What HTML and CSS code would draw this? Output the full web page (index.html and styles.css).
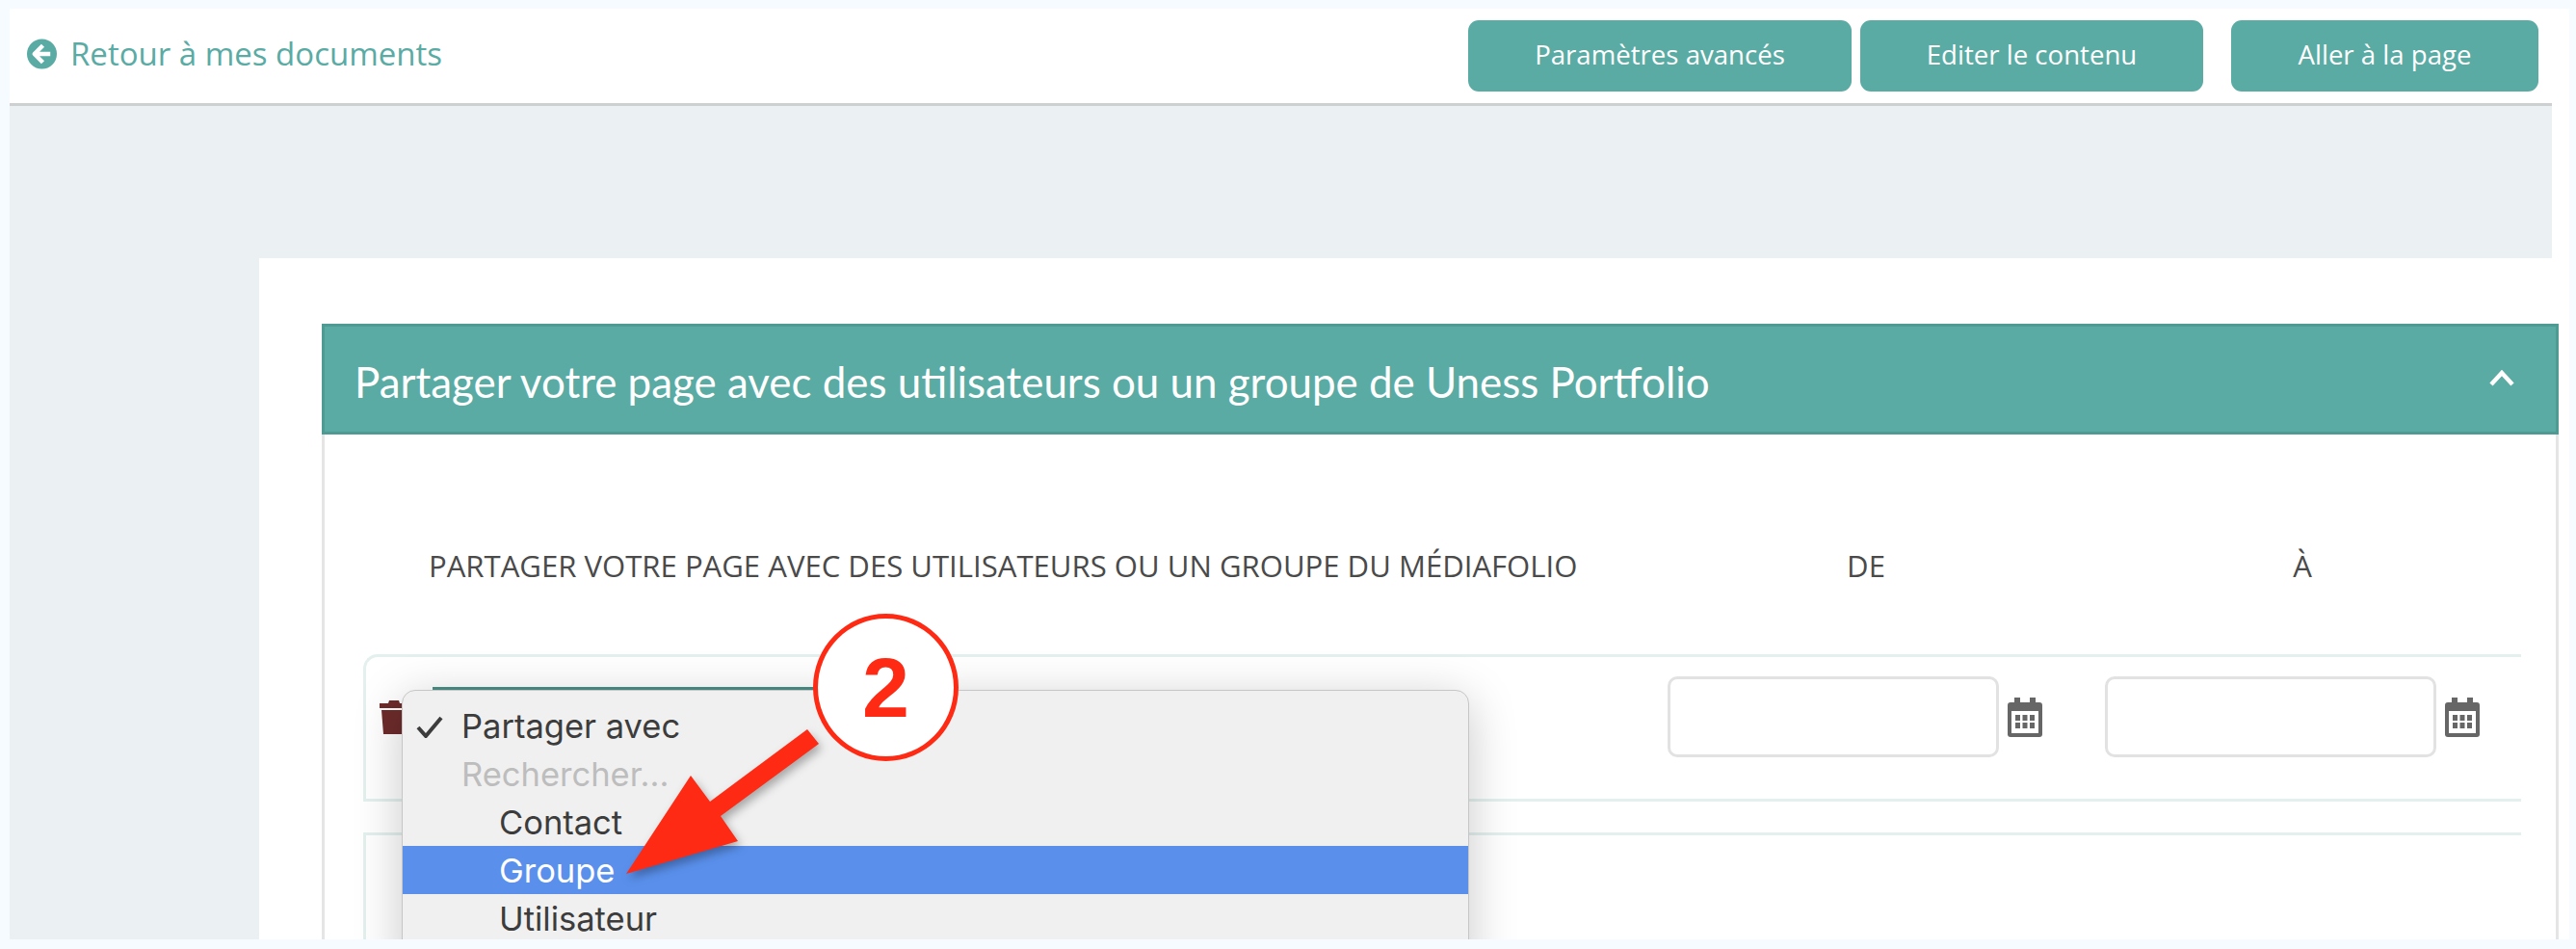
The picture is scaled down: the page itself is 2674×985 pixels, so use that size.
FILE: index.html
```html
<!DOCTYPE html>
<html lang="fr">
<head>
<meta charset="UTF-8">
<meta name="viewport" content="width=device-width, initial-scale=1.0">
<title>Partager votre page</title>
<link rel="stylesheet" href="styles.css">
</head>
<body>

<div class="window">

  <!-- barre du haut -->
  <header class="topbar">
    <a class="back-link" href="#">
      <svg class="back-icon" viewBox="0 0 32 32">
        <circle cx="16" cy="16" r="16" fill="#5aaba4"/>
        <path d="M17 7 L8 16 L17 25 M8.5 16 H25" fill="none" stroke="#fff" stroke-width="4.6" stroke-linejoin="round"/>
      </svg>
      <span>Retour à mes documents</span>
    </a>
    <div class="actions">
      <button class="btn btn-settings">Paramètres avancés</button>
      <button class="btn btn-edit">Editer le contenu</button>
      <button class="btn btn-go">Aller à la page</button>
    </div>
  </header>

  <main class="content">
    <section class="card">
      <div class="panel">
        <div class="panel-header">
          <h2>Partager votre page avec des utilisateurs ou un groupe de Uness Portfolio</h2>
          <svg class="chevron" viewBox="0 0 26 17">
            <path d="M2 15 L13 3 L24 15" fill="none" stroke="#fff" stroke-width="4.4"/>
          </svg>
        </div>
        <div class="panel-body">
          <div class="columns">
            <div class="col-who">Partager votre page avec des utilisateurs ou un groupe du Médiafolio</div>
            <div class="col-from">De</div>
            <div class="col-to">À</div>
          </div>

          <div class="share-row">
            <svg class="trash" viewBox="0 0 30 35">
              <path d="M10 0 H20 L21 3 H30 V8 H0 V3 H9 Z M2 10 H28 L26 35 H4 Z" fill="#6e2b2b"/>
            </svg>
            <div class="select-box"></div>
            <div class="date-field date-from">
              <div class="date-input"></div>
              <svg class="cal" viewBox="0 0 36 41">
                <path d="M3 5 H7 V0 H13 V5 H23 V0 H29 V5 H33 Q36 5 36 8 V38 Q36 41 33 41 H3 Q0 41 0 38 V8 Q0 5 3 5 Z" fill="#666"/>
                <rect x="4" y="14" width="28" height="23" fill="#fff"/>
                <g fill="#666">
                  <rect x="8" y="18" width="5" height="6"/><rect x="15.500" y="18" width="5" height="6"/><rect x="23" y="18" width="5" height="6"/>
                  <rect x="8" y="26" width="5" height="6"/><rect x="15.500" y="26" width="5" height="6"/><rect x="23" y="26" width="5" height="6"/>
                </g>
              </svg>
            </div>
            <div class="date-field date-to">
              <div class="date-input"></div>
              <svg class="cal" viewBox="0 0 36 41">
                <path d="M3 5 H7 V0 H13 V5 H23 V0 H29 V5 H33 Q36 5 36 8 V38 Q36 41 33 41 H3 Q0 41 0 38 V8 Q0 5 3 5 Z" fill="#666"/>
                <rect x="4" y="14" width="28" height="23" fill="#fff"/>
                <g fill="#666">
                  <rect x="8" y="18" width="5" height="6"/><rect x="15.500" y="18" width="5" height="6"/><rect x="23" y="18" width="5" height="6"/>
                  <rect x="8" y="26" width="5" height="6"/><rect x="15.500" y="26" width="5" height="6"/><rect x="23" y="26" width="5" height="6"/>
                </g>
              </svg>
            </div>
          </div>

          <div class="share-row share-row-next"></div>
        </div>
      </div>
    </section>
  </main>

  <!-- menu deroulant natif -->
  <div class="menu">
    <div class="menu-item">
      <svg class="check" viewBox="0 0 28 23">
        <path d="M2 12 L10 21 L26 2" fill="none" stroke="#3c3c3c" stroke-width="4"/>
      </svg>
      <span>Partager avec</span>
    </div>
    <div class="menu-item is-disabled"><span>Rechercher...</span></div>
    <div class="menu-item is-child"><span>Contact</span></div>
    <div class="menu-item is-child is-active"><span>Groupe</span></div>
    <div class="menu-item is-child"><span>Utilisateur</span></div>
  </div>

  <!-- annotation rouge -->
  <svg class="arrow" viewBox="0 0 260 200">
    <polygon points="198,28 210,43 108,118 126,144 10,178 77,76 97,103" fill="#fe2a14"/>
  </svg>
  <div class="step-badge">2</div>
</div>

</body>
</html>
```

FILE: styles.css
```css
body {
  margin: 0;
  height: 985px;
  overflow: hidden;
  background-color: #f5fbfe;
  font-family: "Open Sans", sans-serif;
}
.window {
  position: relative;
  width: 2657px;
  height: 966px;
  margin: 9px 0 0 10px;
  overflow: hidden;
  background-color: #fff;
  display: flex;
  flex-direction: column;
}

/* barre du haut */
.topbar {
  height: 98px;
  flex-shrink: 0;
  border-bottom: 3px solid #cdcfd1;
  margin-right: 18px;
  padding-left: 18px;
  display: flex;
  align-items: flex-start;
  justify-content: space-between;
}
.back-link {
  display: flex;
  align-items: center;
  gap: 14px;
  margin-top: 31px;
  color: #5aaba4;
  font-size: 33px;
  line-height: 32px;
  text-decoration: none;
}
.back-icon {
  width: 31px;
  height: 32px;
}
.actions {
  display: flex;
  margin-top: 12px;
  margin-right: 14px;
}
.btn {
  height: 74px;
  padding: 0 0 4px;
  border: none;
  border-radius: 11px;
  background-color: #5aaba4;
  color: #fff;
  font-family: "Open Sans", sans-serif;
  font-size: 27.6px;
}
.btn-settings { width: 398px; }
.btn-edit { width: 356px; margin-left: 9px; }
.btn-go { width: 319px; margin-left: 29px; }

/* contenu */
.content {
  flex: 1;
  margin-right: 18px;
  padding: 158px 0 0 259px;
  background-color: #ebf0f3;
}
.card {
  height: 100%;
  margin-right: -18px;
  padding: 68px 11px 0 65px;
  background-color: #fff;
}
.panel-header {
  box-sizing: border-box;
  height: 115px;
  padding: 0 43px 0 31px;
  border: 3px solid #4f9a92;
  background-color: #5aaba4;
  display: flex;
  align-items: center;
  justify-content: space-between;
}
.panel-header h2 {
  margin: 4px 0 0;
  color: #fff;
  font-family: Lato, sans-serif;
  font-size: 43.9px;
  font-weight: 400;
}
.chevron {
  width: 26px;
  height: 17px;
  margin-top: -3px;
}
.panel-body {
  height: 600px;
  border-left: 3px solid #e5e5e5;
  border-right: 3px solid #e5e5e5;
  padding: 0 36px 0 40px;
}
.columns {
  box-sizing: border-box;
  height: 228px;
  padding-top: 44px;
  display: flex;
  align-items: center;
  color: #4a4a4a;
  font-size: 31.1px;
  text-transform: uppercase;
  text-align: center;
}
.col-who {
  flex-shrink: 0;
  width: 1400px;
  padding-left: 68px;
  box-sizing: border-box;
  text-align: left;
}
.col-from {
  flex-shrink: 0;
  width: 320px;
  margin-right: 66px;
}
.col-to {
  flex-shrink: 0;
  width: 454px;
}

/* lignes de partage */
.share-row {
  box-sizing: border-box;
  height: 153px;
  border: 3px solid #e3f0ee;
  border-right: none;
  border-radius: 15px 0 0 0;
  padding-left: 14px;
  display: flex;
  align-items: flex-start;
}
.share-row-next {
  margin-top: 32px;
  height: 300px;
  border-radius: 0;
}
.trash {
  width: 30px;
  height: 35px;
  margin-top: 45px;
}
.select-box {
  width: 440px;
  height: 60px;
  margin: 31px 810px 0 25px;
  border-top: 3px solid #4b8f86;
}
.date-field {
  display: flex;
  align-items: center;
  gap: 9px;
  margin-top: 20px;
}
.date-from { margin-left: 32px; }
.date-to { margin-left: 65px; }
.date-input {
  box-sizing: border-box;
  width: 344px;
  height: 84px;
  border: 3px solid #e2e2e2;
  border-radius: 10px;
}
.cal {
  width: 36px;
  height: 41px;
}

/* menu */
.menu {
  position: absolute;
  left: 407px;
  top: 707px;
  box-sizing: border-box;
  width: 1108px;
  height: 300px;
  padding-top: 11px;
  border: 1px solid #c6c6c6;
  border-radius: 14px;
  background-color: #f0f0f0;
  box-shadow: 0 10px 50px rgba(0, 0, 0, 0.22);
  font-family: Inter, sans-serif;
  font-size: 34.5px;
  color: #3c3c3c;
}
.menu-item {
  position: relative;
  height: 50px;
  line-height: 51px;
  padding-left: 61px;
}
.menu-item.is-child {
  padding-left: 100px;
}
.menu-item.is-disabled {
  color: #bdbdbd;
}
.menu-item.is-active {
  background-color: #5a90ec;
  color: #fff;
}
.check {
  position: absolute;
  left: 14px;
  top: 15px;
  width: 28px;
  height: 23px;
}

/* annotation */
.arrow {
  position: absolute;
  left: 630px;
  top: 720px;
  width: 260px;
  height: 200px;
  filter: drop-shadow(3px 5px 5px rgba(0, 0, 0, 0.3));
}
.step-badge {
  position: absolute;
  left: 834px;
  top: 628px;
  box-sizing: border-box;
  width: 151px;
  height: 153px;
  border: 5px solid #fe2a14;
  border-radius: 50%;
  background-color: #fff;
  color: #fe2a14;
  font-family: "Liberation Sans", sans-serif;
  font-size: 88px;
  font-weight: 700;
  line-height: 143px;
  text-align: center;
}
```
